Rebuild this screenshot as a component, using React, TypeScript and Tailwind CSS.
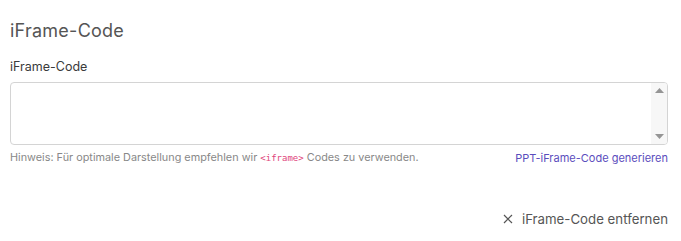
import React from 'react';

export default function App() {
  return (
    <div className="w-[681px] h-[241px] bg-white pl-[10px] pt-[20px] font-['Inter',sans-serif]">
      <div className="w-[658px]">
        <h2 className="text-[18px] leading-[22px] tracking-[0.25px] text-[#555] font-normal">iFrame-Code</h2>

        <div className="mt-[17px]">
          <label className="block text-[12.5px] leading-[15px] font-normal text-[#3a3a3a]">iFrame-Code</label>
          <div className="relative mt-[8px]">
            <textarea className="block w-[658px] h-[63px] resize-none rounded-[4px] border border-[#d4d4d4] bg-white outline-none" />
            {/* fake classic scrollbar */}
            <div className="pointer-events-none absolute right-[1px] top-[1px] bottom-[1px] w-[16px] rounded-r-[3px] bg-[#f7f7f7] flex flex-col items-center justify-between py-[5px]">
              <svg width="9" height="5" viewBox="0 0 9 5">
                <path d="M4.5 0L9 5H0Z" fill="#959595" />
              </svg>
              <svg width="9" height="5" viewBox="0 0 9 5">
                <path d="M0 0H9L4.5 5Z" fill="#959595" />
              </svg>
            </div>
          </div>
          <div className="mt-[5px] flex items-center justify-between leading-[14px]">
            <span className="text-[10.85px] text-[#888]">
              Hinweis: Für optimale Darstellung empfehlen wir{' '}
              <code className="font-['DejaVu_Sans_Mono',monospace] text-[9px] text-[#e0457b]">&lt;iframe&gt;</code>{' '}
              Codes zu verwenden.
            </span>
            <a href="#" className="text-[11px] text-[#5b4dbd]">PPT-iFrame-Code generieren</a>
          </div>
        </div>

        <div className="mt-[46px] flex justify-end">
          <button className="flex items-center gap-[9px] text-[13.25px] leading-[16px] text-[#555]">
            <svg width="10" height="10" viewBox="0 0 10 10" fill="none" stroke="#555" strokeWidth="1.2">
              <path d="M1 1L9 9M9 1L1 9" />
            </svg>
            iFrame-Code entfernen
          </button>
        </div>
      </div>
    </div>
  );
}
